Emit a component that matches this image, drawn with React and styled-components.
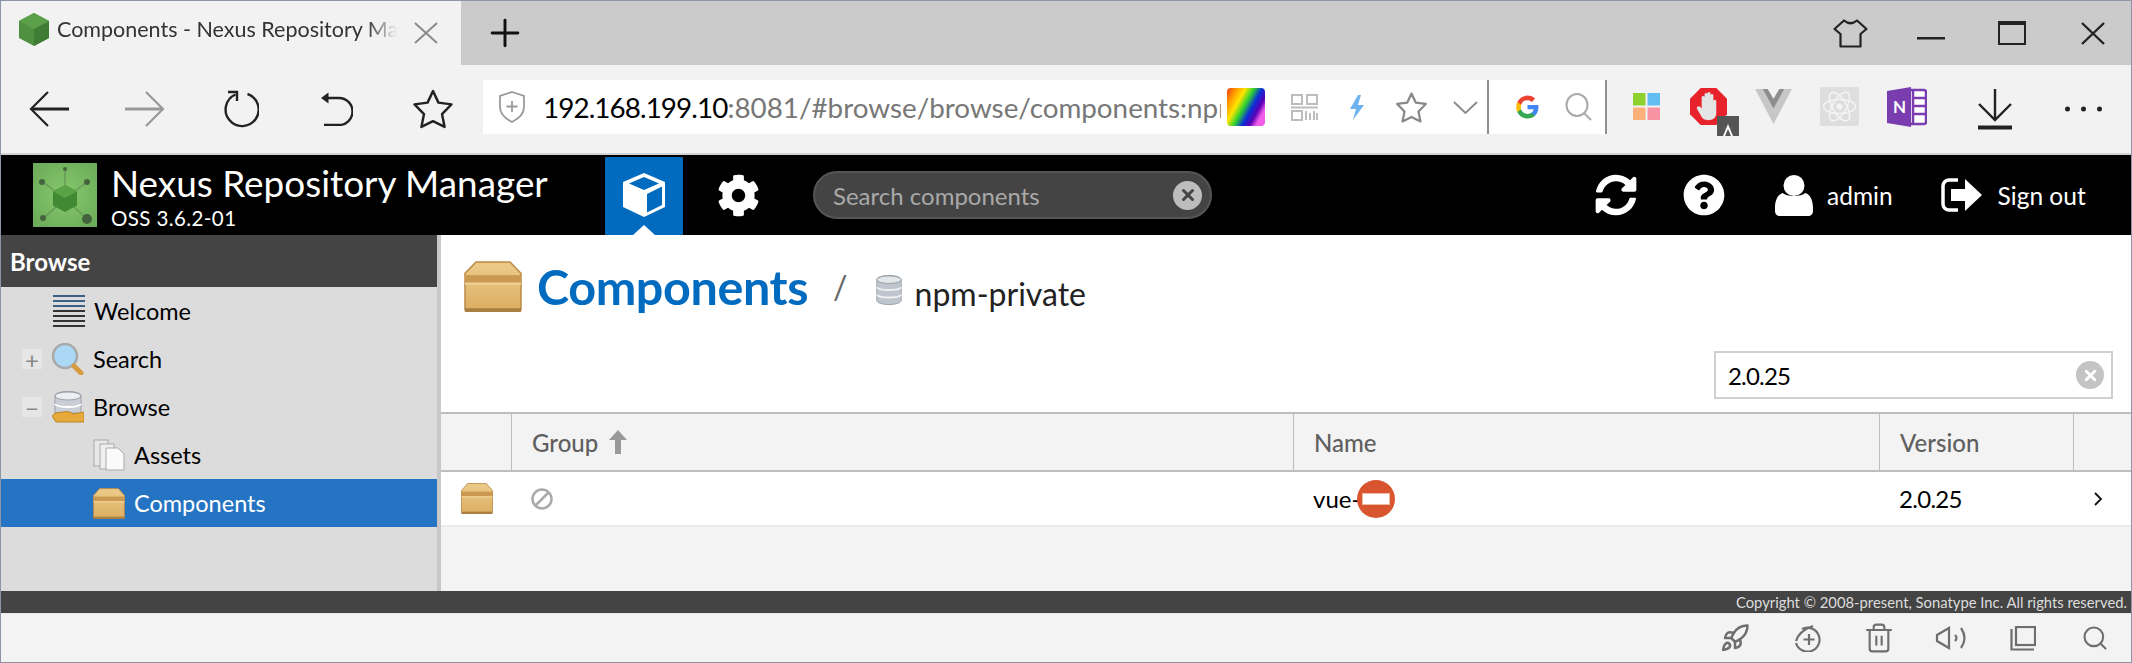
import React from "react";
import styled, { createGlobalStyle } from "styled-components";
import { FaCog, FaQuestionCircle, FaSyncAlt } from "react-icons/fa";
import { Trash2, Search as SearchGlyph, Rocket, X, Plus } from "lucide-react";

const Global = createGlobalStyle`
  html, body { margin: 0; padding: 0; background: #fff; }
  body { font-family: Lato, "Noto Sans", sans-serif; color: #000; }
`;
const Page = styled.div`
  width: 2132px; height: 663px; box-sizing: border-box; overflow: hidden;
  border: 1px solid #8c96a8; display: flex; flex-direction: column;
`;
const TabStrip = styled.div`
  height: 64px; flex: none; background: #cbcbcb; display: flex; align-items: stretch;
`;
const ActiveTab = styled.div`
  width: 460px; background: #f2f2f2; display: flex; align-items: center; padding: 0 0 8px 18px; box-sizing: border-box;
`;
const TabTitle = styled.div`
  width: 340px; margin-left: 8px; white-space: nowrap; overflow: hidden; font-size: 21.5px; color: #333;
  -webkit-mask-image: linear-gradient(90deg, #000 91%, transparent 100%);
  mask-image: linear-gradient(90deg, #000 91%, transparent 100%);
`;
const TabClose = styled.div`
  margin: 8px 0 0 17px; display: flex;
`;
const NewTab = styled.div`
  width: 88px; display: flex; align-items: center; justify-content: center; color: #111;
`;
const Spacer = styled.div`flex: 1;`;
const WindowControls = styled.div`
  display: flex; gap: 41px; padding-right: 18px;
`;
const WindowBtn = styled.div`
  width: 40px; display: flex; align-items: center; justify-content: center;
`;
const Toolbar = styled.div`
  height: 88px; flex: none; background: #f2f2f2; display: flex; align-items: center; border-bottom: 2px solid #d4d4d4;
`;
const NavBtn = styled.div`
  width: 96px; height: 100%; flex: none; display: flex; align-items: center; justify-content: center;
`;
const NavGroup = styled.div`
  display: flex; height: 100%; width: 482px; flex: none;
`;
const Address = styled.div`
  width: 1124px; height: 54px; background: #fff; flex: none; display: flex; align-items: center; box-sizing: border-box;
  padding-left: 16px; margin-top: -4px; border-right: 2px solid #8f8f8f;
`;
const UrlText = styled.div`
  width: 678px; flex: none; margin-left: 18px; overflow: hidden; white-space: nowrap; font-size: 27.8px; color: #777;
  b { font-weight: 400; color: #000; letter-spacing: -.9px; }
`;
const AddrIcon = styled.div`
  width: ${p => p.$w}px; margin-left: ${p => p.$ml || 0}px; flex: none; display: flex; justify-content: center; align-items: center;
  svg { flex: none; }
`;
const Divider = styled.div`
  width: 2px; height: 100%; background: #8f8f8f; flex: none;
`;
const Extensions = styled.div`
  display: flex; align-items: center; padding: 0 0 5px 9px; flex: none;
`;
const ExtBtn = styled.div`
  position: relative; width: ${p => p.$w}px; display: flex; align-items: center; justify-content: center;
`;
const Badge = styled.div`
  position: absolute; left: 40px; top: 28px; width: 22px; height: 20px; background: #555;
  display: flex; align-items: flex-end; justify-content: center;
`;
const ToolEnd = styled.div`
  width: ${p => p.$w}px; display: flex; justify-content: center; align-items: center; flex: none;
`;
const AppHeader = styled.div`
  height: 80px; flex: none; background: #000; display: flex; align-items: center; color: #fff;
`;
const Logo = styled.div`
  width: 64px; height: 64px; margin-left: 32px; flex: none; display: flex;
`;
const Brand = styled.div`
  margin-left: 14px; width: 494px; flex: none;
`;
const BrandName = styled.div`
  font-size: 36.9px; line-height: 40px; white-space: nowrap; margin-top: 2px;
`;
const BrandVersion = styled.div`
  font-size: 20.5px; line-height: 22px; letter-spacing: .4px; white-space: nowrap; margin-top: 4px;
`;
const ModeTab = styled.div`
  position: relative; width: 78px; height: 78px; margin-top: 2px; flex: none; background: #006bbf;
  display: flex; align-items: flex-start; justify-content: center; padding-top: 15px; box-sizing: border-box;
  &::after { content: ""; position: absolute; left: 28px; bottom: 0; border: 11px solid transparent; border-top: 0; border-bottom: 10px solid #fff; }
`;
const GearBtn = styled.div`
  width: 111px; display: flex; justify-content: center; flex: none;
`;
const SearchBox = styled.div`
  width: 399px; height: 48px; margin-left: 19px; box-sizing: border-box; background: #444; border: 2px solid #555; border-radius: 24px;
  display: flex; align-items: center; padding: 0 8px 0 18px; justify-content: space-between; color: #a9a9a9; font-size: 24px; flex: none;
`;
const HeaderBtn = styled.div`
  display: flex; align-items: center; margin-left: ${p => p.$ml}px; font-size: 24.5px; gap: ${p => p.$gap || 0}px; white-space: nowrap; flex: none;
`;
const ClearDot = styled.div`
  width: ${p => p.$s}px; height: ${p => p.$s}px; border-radius: 50%; background: ${p => p.$bg};
  display: flex; align-items: center; justify-content: center; color: ${p => p.$fg}; flex: none;
`;
const Body = styled.div`
  height: 356px; flex: none; display: flex;
`;
const Sidebar = styled.div`
  width: 436px; flex: none; background: #dcdcdc; border-right: 4px solid #c8c8c8;
`;
const SidebarHead = styled.div`
  height: 52px; background: #444; color: #fff; font-size: 24px; font-weight: 700; display: flex; align-items: center; padding-left: 9px;
`;
const TreeRow = styled.div`
  height: 48px; display: flex; align-items: center; font-size: 23.5px; padding-left: ${p => p.$pl}px;
  background: ${p => p.$sel ? "#2574c3" : "transparent"}; color: ${p => p.$sel ? "#fff" : "#000"};
`;
const Expander = styled.div`
  width: 20px; height: 20px; margin-right: 10px; background: #e6e6e6; color: #888; font-size: 24px; display: flex; align-items: center; justify-content: center; flex: none;
`;
const TreeIcon = styled.div`
  width: 32px; height: 32px; margin-right: 9px; display: flex; align-items: center; flex: none;
`;
const Main = styled.div`
  flex: 1; min-width: 0; display: flex; flex-direction: column; background: #f3f3f3;
`;
const TitleBar = styled.div`
  height: 116px; background: #fff; flex: none; display: flex; align-items: flex-start; padding: 26px 0 0 23px; box-sizing: border-box;
`;
const TitleText = styled.div`
  color: #006bbf; font-size: 48.5px; font-weight: 700; line-height: 50px; margin-left: 15px; letter-spacing: -.4px;
`;
const Slash = styled.div`
  font-size: 32px; color: #666; margin: 6px 27px 0 25px; line-height: 40px;
`;
const CrumbIcon = styled.div`
  margin-top: 14px; display: flex;
`;
const Crumb = styled.div`
  font-size: 32px; line-height: 40px; margin: 13px 0 0 12px; color: #222;
`;
const FilterBar = styled.div`
  height: 61px; flex: none; background: #fff; display: flex; justify-content: flex-end; padding-right: 18px; box-sizing: border-box;
`;
const Filter = styled.div`
  width: 399px; height: 48px; box-sizing: border-box; border: 2px solid #cfcfcf; display: flex; align-items: center; justify-content: space-between;
  font-size: 24px; padding: 0 7px 0 12px; background: #fff; letter-spacing: -.8px;
`;
const Cols = "70px 782px 586px 194px 59px";
const HeadRow = styled.div`
  display: grid; grid-template-columns: ${Cols}; height: 60px; flex: none; box-sizing: border-box; background: #f3f3f3;
  border-top: 2px solid #bdbdbd; border-bottom: 2px solid #bdbdbd; padding-bottom: 2px;
`;
const HeadCell = styled.div`
  display: flex; align-items: center; gap: 10px; font-size: 24px; font-weight: 500; color: #5f5f5f; padding-left: 20px;
  &:not(:first-child) { border-left: 1px solid #bdbdbd; margin-bottom: -2px; }
`;
const DataRow = styled.div`
  display: grid; grid-template-columns: ${Cols}; height: 55px; flex: none; box-sizing: border-box; background: #fff; border-bottom: 2px solid #ececec;
`;
const DataCell = styled.div`
  display: flex; align-items: center; font-size: 24px; padding-left: 20px; min-width: 0; position: relative; letter-spacing: ${p => p.$tight ? "-.7px" : "0"};
`;
const Blocked = styled.div`
  position: absolute; left: 64px; top: 8px; width: 38px; height: 38px; border-radius: 50%; background: #d8552f;
  display: flex; align-items: center; justify-content: center;
  &::after { content: ""; width: 26px; height: 10px; background: #fff; border: 1px solid #f2b9a4; }
`;
const Footer = styled.div`
  height: 22px; flex: none; background: #444; color: #ddd; font-size: 14.8px; display: flex; align-items: center; justify-content: flex-end; padding-right: 4px;
`;
const StatusBar = styled.div`
  flex: 1; background: #f3f3f3; display: flex; justify-content: flex-end; align-items: center; border-top: 1px solid #e8e8e8;
`;
const StatusBtn = styled.div`
  width: 72px; display: flex; justify-content: center; color: #6e6e6e;
`;
const BoxSvg = styled.svg`flex: none;`;

const Hex = () => (
  <svg width="30" height="33" viewBox="0 0 30 33">
    <path d="M15 0 30 8v17l-15 8-15-8V8z" fill="#4e9040" />
    <path d="M15 16 30 8v17l-15 8z" fill="#3f7d34" />
    <path d="M15 0 30 8 15 16 0 8z" fill="#5ca04a" />
  </svg>
);
const Box = ({ w, h }) => (
  <BoxSvg width={w} height={h} viewBox="0 0 58 54" preserveAspectRatio="none">
    <defs><linearGradient id="bx" x1="0" y1="0" x2="0" y2="1"><stop offset="0" stopColor="#eccb8a" /><stop offset="1" stopColor="#dcae62" /></linearGradient></defs>
    <path d="M12 1h34l11 12v38a2 2 0 0 1-2 2H3a2 2 0 0 1-2-2V13z" fill="url(#bx)" stroke="#b98a45" strokeWidth="1.500" />
    <rect x="1" y="15" width="56" height="8" fill="#c99a4f" />
    <rect x="1" y="23" width="56" height="2" fill="#f0d49c" />
    <rect x="1" y="50" width="56" height="4" fill="#a97f42" />
  </BoxSvg>
);
const Cube = () => (
  <svg width="46" height="46" viewBox="0 0 46 46">
    <path d="M23 1 44 10v25L23 45 2 35V10z" fill="#fff" />
    <path d="M23 5 38 11.500 23 18 8 11.500z" fill="#006bbf" />
    <path d="M26 22 41 14.500V33L26 40.500z" fill="#006bbf" />
  </svg>
);
const NexusLogo = () => (
  <svg width="64" height="64" viewBox="0 0 64 64">
    <defs><radialGradient id="g" cx=".5" cy=".5" r=".7"><stop offset="0" stopColor="#86c96c" /><stop offset="1" stopColor="#6aa958" /></radialGradient></defs>
    <rect width="64" height="64" fill="url(#g)" />
    <g stroke="#5d8d52" strokeWidth="1.500" opacity=".7">
      <path d="M32 8v14M10 19l12 9M54 19l-12 9M12 54l12-11M52 54l-12-11" />
    </g>
    <g fill="#44643e"><circle cx="9" cy="19" r="3" /><circle cx="54" cy="19" r="3" /><circle cx="32" cy="6" r="2" /><circle cx="10" cy="55" r="3" /><circle cx="54" cy="56" r="5" /></g>
    <path d="M32 22l12 6.500v14L32 49 20 42.500v-14z" fill="#3f8a32" />
    <path d="M32 22l12 6.500L32 35 20 28.500z" fill="#5aa344" />
  </svg>
);
const Lines = () => (
  <svg width="32" height="32" viewBox="0 0 32 32">
    {[0, 1, 2, 3, 4, 5, 6].map(i => <rect key={i} y={i * 5} width="32" height="2" fill={i < 3 ? "#3d5f86" : "#333"} />)}
  </svg>
);
const Magnifier = () => (
  <svg width="32" height="32" viewBox="0 0 32 32">
    <circle cx="13" cy="13" r="12" fill="#aad8f5" stroke="#a9a9a9" strokeWidth="2.500" />
    <path d="M22 23l7 7" stroke="#d59b3f" strokeWidth="5" strokeLinecap="round" />
  </svg>
);
const DbHand = () => (
  <svg width="32" height="32" viewBox="0 0 32 32">
    <path d="M3 5c0-6 26-6 26 0v17H3z" fill="#c9ced6" stroke="#9aa0aa" />
    <ellipse cx="16" cy="5" rx="13" ry="4" fill="#eceef2" stroke="#9aa0aa" />
    <path d="M3 13c3 4 23 4 26 0" fill="none" stroke="#fff" strokeWidth="2" />
    <path d="M0 25c4-5 8-3 11-4 4-1 8 0 10 2l11-2v10H4z" fill="#e6a93a" stroke="#b9862b" />
  </svg>
);
const Pages = () => (
  <svg width="32" height="32" viewBox="0 0 32 32">
    <rect x="1" y="1" width="14" height="26" fill="#e8e8e8" stroke="#aaa" />
    <rect x="7" y="5" width="14" height="25" fill="#efefef" stroke="#aaa" />
    <path d="M13 9h12l6 6v16H13z" fill="#fafafa" stroke="#aaa" />
  </svg>
);
const Database = () => (
  <svg width="28" height="30" viewBox="0 0 28 32">
    <path d="M1 5c0-6 26-6 26 0v22c0 6-26 6-26 0z" fill="#bfc5cc" stroke="#98a0a8" />
    <ellipse cx="14" cy="5" rx="13" ry="4" fill="#e4e7ea" stroke="#98a0a8" />
    <path d="M1 13c3 4 23 4 26 0M1 21c3 4 23 4 26 0" fill="none" stroke="#eef0f2" strokeWidth="2" />
  </svg>
);
const BanIcon = () => (
  <svg width="22" height="22" viewBox="0 0 22 22" fill="none" stroke="#aaa" strokeWidth="2.500">
    <circle cx="11" cy="11" r="9.500" /><path d="M4.500 17.500l13-13" />
  </svg>
);
const UpArrow = () => (
  <svg width="20" height="24" viewBox="0 0 20 24"><path d="M10 0l9 10h-6v14H7V10H1z" fill="#999" /></svg>
);
const Rainbow = () => (
  <svg width="38" height="38" viewBox="0 0 38 38">
    <defs><linearGradient id="r" x1="0" y1="0" x2="1" y2=".55">
      <stop offset="0" stopColor="#f03a14" /><stop offset=".2" stopColor="#ff9a00" /><stop offset=".38" stopColor="#ffe600" /><stop offset=".55" stopColor="#2fd32f" />
      <stop offset=".72" stopColor="#0a2fd8" /><stop offset=".87" stopColor="#5a00b5" /><stop offset="1" stopColor="#f05ce8" /></linearGradient></defs>
    <rect width="38" height="38" rx="4" fill="url(#r)" />
  </svg>
);
const QrIcon = () => (
  <svg width="27" height="27" viewBox="0 0 27 27" fill="none" stroke="#bdbdbd" strokeWidth="2">
    <rect x="1" y="1" width="10" height="9" /><rect x="16" y="1" width="10" height="9" /><path d="M0 13.500h27" /><rect x="1" y="17" width="10" height="9" />
    <path d="M15 17v9M19 19v7M23 17v9M26 19v7" />
  </svg>
);
const Bolt = () => (
  <svg width="16" height="25" viewBox="0 0 16 25"><path d="M9 0 1 14h6l-3 11L15 10H9l3-10z" fill="#6db3ee" /></svg>
);
const StarIcon = ({ s, c, sw }) => (
  <svg width={s} height={s} viewBox="0 0 39 39" fill="none" stroke={c} strokeWidth={sw} strokeLinejoin="round">
    <path d="M19.500 2 24.800 13.300 37.500 15 28.300 24.500 30.800 37 19.500 31.400 8.200 37 10.700 24.500 1.500 15 14.200 13.300z" />
  </svg>
);
const GoogleG = () => (
  <svg width="25" height="26" viewBox="0 0 48 48">
    <path fill="#4285F4" d="M45.100 24.500c0-1.600-.100-3.100-.400-4.500H24v8.500h11.800c-.500 2.800-2 5.100-4.400 6.700v5.600h7.100c4.200-3.800 6.600-9.500 6.600-16.300z" />
    <path fill="#34A853" d="M24 46c5.900 0 10.900-2 14.500-5.300l-7.100-5.600c-2 1.300-4.500 2.100-7.400 2.100-5.700 0-10.500-3.800-12.200-9H4.500v5.700C8.100 41.200 15.500 46 24 46z" />
    <path fill="#FBBC05" d="M11.800 28.100c-.400-1.300-.700-2.700-.700-4.100s.300-2.800.700-4.100v-5.700H4.500C3 17.200 2.200 20.500 2.200 24s.800 6.800 2.300 9.800z" />
    <path fill="#EA4335" d="M24 10.900c3.200 0 6.100 1.100 8.400 3.300l6.300-6.300C34.900 4.300 29.900 2 24 2 15.500 2 8.100 6.800 4.500 14.200l7.300 5.700c1.700-5.200 6.500-9 12.200-9z" />
  </svg>
);
const Tiles = () => (
  <svg width="27" height="27" viewBox="0 0 27 27">
    <rect width="12.500" height="12.500" fill="#8ed12f" /><rect x="14.500" width="12.500" height="12.500" fill="#62bdf5" />
    <rect y="14.500" width="12.500" height="12.500" fill="#fdb07a" /><rect x="14.500" y="14.500" width="12.500" height="12.500" fill="#f893a3" />
  </svg>
);
const AdBlock = () => (
  <svg width="37" height="37" viewBox="0 0 38 38">
    <path d="M11 0h16l11 11v16L27 38H11L0 27V11z" fill="#e8222a" />
    <path d="M12 22V9a2 2 0 0 1 3 0V6a2 2 0 0 1 3 0v-1a2 2 0 0 1 3 0v2a2 2 0 0 1 3 0v6a2 2 0 0 1 3 0v13c0 5-4 7-8 7s-6-1-8-5l-4-7c0-3 3-3 5 0z" fill="#e4e4e4" />
  </svg>
);
const VueGray = () => (
  <svg width="39" height="35" viewBox="0 0 38 36">
    <path d="M0 0h38L19 36z" fill="#c7c7c7" /><path d="M8 0h22L19 20z" fill="#8e8e8e" /><path d="M13 0h12L19 10z" fill="#f2f2f2" />
  </svg>
);
const ReactGray = () => (
  <svg width="39" height="39" viewBox="0 0 39 39">
    <rect width="39" height="39" rx="2" fill="#dedede" />
    <g fill="none" stroke="#f4f4f4" strokeWidth="1.500">
      <ellipse cx="19.500" cy="19.500" rx="16" ry="7" /><ellipse cx="19.500" cy="19.500" rx="16" ry="7" transform="rotate(60 19.500 19.500)" /><ellipse cx="19.500" cy="19.500" rx="16" ry="7" transform="rotate(120 19.500 19.500)" />
    </g>
    <circle cx="19.500" cy="19.500" r="3" fill="#f4f4f4" />
  </svg>
);
const OneNote = () => (
  <svg width="40" height="40" viewBox="0 0 40 40">
    <path d="M19 3h18a2 2 0 0 1 2 2v30a2 2 0 0 1-2 2H19z" fill="#fff" stroke="#7a3db0" strokeWidth="2.500" />
    <path d="M26 3v34M26 11h13M26 19h13M26 27h13" stroke="#7a3db0" strokeWidth="2.500" />
    <path d="M0 4 24 0v40L0 36z" fill="#7a3db0" />
    <text x="6" y="26" fontFamily="Lato, sans-serif" fontWeight="700" fontSize="17" fill="#fff">N</text>
  </svg>
);
const BackArrow = ({ c, flip }) => (
  <svg width="40" height="36" viewBox="0 0 40 36" fill="none" stroke={c} transform={flip ? "scale(-1 1)" : undefined}>
    <path d="M19 1 2 18l17 17" strokeWidth="2.200" /><path d="M3 18h37" strokeWidth="3.200" />
  </svg>
);
const Reload = () => (
  <svg width="36" height="38" viewBox="0 0 36 38" fill="none" stroke="#222" strokeWidth="2.400">
    <path d="M12.500 4.500A16.500 16.500 0 1 0 24.500 4" /><path d="M5 2h9v9" />
  </svg>
);
const UndoIcon = () => (
  <svg width="32" height="34" viewBox="0 0 32 34" fill="none" stroke="#222" strokeWidth="2.400">
    <path d="M3 6h15a13.500 13.500 0 0 1 0 27H3" /><path d="M0 6l7.500-5.500v11z" fill="#222" stroke="none" />
  </svg>
);
const Shirt = () => (
  <svg width="35" height="29" viewBox="0 0 35 29" fill="none" stroke="#222" strokeWidth="2.200" strokeLinejoin="round">
    <path d="M11 1.500Q17.500 7 24 1.500L33.500 10 27.500 15V27.500H7.500V15L1.500 10z" />
  </svg>
);
const MinimizeIcon = () => (
  <svg width="28" height="26" viewBox="0 0 28 26"><rect y="17" width="28" height="2.500" fill="#222" /></svg>
);
const Maximize = () => (
  <svg width="28" height="24" viewBox="0 0 28 24" fill="none" stroke="#222" strokeWidth="2">
    <rect x="1" y="1" width="26" height="22" /><path d="M1 2.500h26" strokeWidth="3" />
  </svg>
);
const Cross = ({ w, h, c, sw }) => (
  <svg width={w} height={h} viewBox={`0 0 ${w} ${h}`} fill="none" stroke={c} strokeWidth={sw}>
    <path d={`M1 1 ${w - 1} ${h - 1}M${w - 1} 1 1 ${h - 1}`} />
  </svg>
);
const Chevron = () => (
  <svg width="25" height="13" viewBox="0 0 25 13" fill="none" stroke="#888" strokeWidth="1.800"><path d="M1 1l11.500 11L24 1" /></svg>
);
const Lens = () => (
  <svg width="27" height="28" viewBox="0 0 27 28" fill="none" stroke="#aaa" strokeWidth="2">
    <ellipse cx="12" cy="12" rx="10.500" ry="11" /><path d="M19 20l7 7" />
  </svg>
);
const DownloadIcon = () => (
  <svg width="34" height="41" viewBox="0 0 34 41" fill="none" stroke="#222" strokeWidth="2.400">
    <path d="M17 0v31M1 15l16 16 16-16" /><path d="M0 38.500h34" strokeWidth="4" />
  </svg>
);
const Dots = () => (
  <svg width="37" height="6" viewBox="0 0 37 6" fill="#222"><circle cx="2.500" cy="3" r="2.500" /><circle cx="18.500" cy="3" r="2.500" /><circle cx="34.500" cy="3" r="2.500" /></svg>
);
const UserIcon = () => (
  <svg width="38" height="41" viewBox="0 0 38 41" fill="#fff">
    <circle cx="19" cy="10.500" r="10.500" />
    <path d="M8 18c3 4 19 4 22 0 5 1 8 7 8 15v3c0 3-2 5-5 5H5c-3 0-5-2-5-5v-3c0-8 3-14 8-15z" />
  </svg>
);
const SignOutIcon = () => (
  <svg width="42" height="34" viewBox="0 0 42 34">
    <path d="M17 2H8a6 6 0 0 0-6 6v18a6 6 0 0 0 6 6h9" fill="none" stroke="#fff" strokeWidth="3.500" />
    <path d="M10 11h14V1l17 16-17 16V23H10z" fill="#fff" />
  </svg>
);
const SpeakerIcon = () => (
  <svg width="32" height="24" viewBox="0 0 32 24" fill="none" stroke="#6e6e6e" strokeWidth="2.200">
    <path d="M2 9 14 2v20L2 15zM20 9q3 3 0 6M26 2q7 10 0 20" />
  </svg>
);
const PagesOutline = () => (
  <svg width="26" height="25" viewBox="0 0 26 25" fill="none" stroke="#6e6e6e" strokeWidth="2.200">
    <rect x="6" y="1" width="19" height="18" /><path d="M1.500 3v20.500H24" />
  </svg>
);
const AddCircle = () => (
  <svg width="28" height="27" viewBox="0 0 28 27" fill="none" stroke="#6e6e6e" strokeWidth="2.200">
    <path d="M9 4a12 12 0 1 1-6 14" /><path d="M16 9v11M10.500 14.500h11M3 16Q6 6 20 1" />
  </svg>
);

export default function App() {
  return (
    <>
      <Global />
      <Page>
        <TabStrip>
          <ActiveTab>
            <Hex />
            <TabTitle>Components - Nexus Repository Manager</TabTitle>
            <TabClose><Cross w={24} h={22} c="#8a8a8a" sw={2} /></TabClose>
          </ActiveTab>
          <NewTab><Plus size={44} strokeWidth={1.6} /></NewTab>
          <Spacer />
          <WindowControls>
            <WindowBtn><Shirt /></WindowBtn>
            <WindowBtn><MinimizeIcon /></WindowBtn>
            <WindowBtn><Maximize /></WindowBtn>
            <WindowBtn><Cross w={24} h={23} c="#222" sw={2.4} /></WindowBtn>
          </WindowControls>
        </TabStrip>
        <Toolbar>
          <NavGroup>
            <NavBtn><BackArrow c="#222" /></NavBtn>
            <NavBtn><BackArrow c="#999" flip /></NavBtn>
            <NavBtn><Reload /></NavBtn>
            <NavBtn><UndoIcon /></NavBtn>
            <NavBtn><StarIcon s={40} c="#222" sw={2.4} /></NavBtn>
          </NavGroup>
          <Address>
            <AddrIcon $w={26}>
              <svg width="26" height="32" viewBox="0 0 26 32" fill="none" stroke="#999" strokeWidth="1.800"><path d="M13 1l12 4v11c0 8-6 12-12 15C7 28 1 24 1 16V5z" /><path d="M13 10v11M7.500 15.500h11" /></svg>
            </AddrIcon>
            <UrlText><b>192.168.199.10</b>:8081/#browse/browse/components:npm-private</UrlText>
            <AddrIcon $w={38} $ml={6}><Rainbow /></AddrIcon>
            <AddrIcon $w={78}><QrIcon /></AddrIcon>
            <AddrIcon $w={27}><Bolt /></AddrIcon>
            <AddrIcon $w={83}><StarIcon s={31} c="#888" sw={2.800} /></AddrIcon>
            <AddrIcon $w={25}><Chevron /></AddrIcon>
            <Spacer />
            <Divider />
            <AddrIcon $w={76}><GoogleG /></AddrIcon>
            <AddrIcon $w={27}><Lens /></AddrIcon>
            <AddrIcon $w={13} />
          </Address>
          <Extensions>
            <ExtBtn $w={61}><Tiles /></ExtBtn>
            <ExtBtn $w={63}><AdBlock /><Badge><svg width="10" height="12" viewBox="0 0 10 12"><path d="M5 0 0 12h2l3-7 3 7h2z" fill="#fff" /></svg></Badge></ExtBtn>
            <ExtBtn $w={67}><VueGray /></ExtBtn>
            <ExtBtn $w={65}><ReactGray /></ExtBtn>
            <ExtBtn $w={70}><OneNote /></ExtBtn>
          </Extensions>
          <ToolEnd $w={106}><DownloadIcon /></ToolEnd>
          <ToolEnd $w={70}><Dots /></ToolEnd>
        </Toolbar>
        <AppHeader>
          <Logo><NexusLogo /></Logo>
          <Brand>
            <BrandName>Nexus Repository Manager</BrandName>
            <BrandVersion>OSS 3.6.2-01</BrandVersion>
          </Brand>
          <ModeTab><Cube /></ModeTab>
          <GearBtn><FaCog size={43} /></GearBtn>
          <SearchBox>
            <span>Search components</span>
            <ClearDot $s={29} $bg="#bdbdbd" $fg="#444"><X size={18} strokeWidth={4} /></ClearDot>
          </SearchBox>
          <HeaderBtn $ml={383}><FaSyncAlt size={42} /></HeaderBtn>
          <HeaderBtn $ml={46}><FaQuestionCircle size={42} /></HeaderBtn>
          <HeaderBtn $ml={50} $gap={14}><UserIcon /> admin</HeaderBtn>
          <HeaderBtn $ml={48} $gap={15}><SignOutIcon /> Sign out</HeaderBtn>
        </AppHeader>
        <Body>
          <Sidebar>
            <SidebarHead>Browse</SidebarHead>
            <TreeRow $pl={52}><TreeIcon><Lines /></TreeIcon>Welcome</TreeRow>
            <TreeRow $pl={21}><Expander>+</Expander><TreeIcon><Magnifier /></TreeIcon>Search</TreeRow>
            <TreeRow $pl={21}><Expander>−</Expander><TreeIcon><DbHand /></TreeIcon>Browse</TreeRow>
            <TreeRow $pl={92}><TreeIcon><Pages /></TreeIcon>Assets</TreeRow>
            <TreeRow $pl={92} $sel><TreeIcon><Box w={32} h={31} /></TreeIcon>Components</TreeRow>
          </Sidebar>
          <Main>
            <TitleBar>
              <Box w={58} h={51} />
              <TitleText>Components</TitleText>
              <Slash>/</Slash>
              <CrumbIcon><Database /></CrumbIcon>
              <Crumb>npm-private</Crumb>
            </TitleBar>
            <FilterBar>
              <Filter>2.0.25<ClearDot $s={28} $bg="#c4c4c4" $fg="#fff"><X size={17} strokeWidth={4} /></ClearDot></Filter>
            </FilterBar>
            <HeadRow>
              <HeadCell />
              <HeadCell>Group <UpArrow /></HeadCell>
              <HeadCell>Name</HeadCell>
              <HeadCell>Version</HeadCell>
              <HeadCell />
            </HeadRow>
            <DataRow>
              <DataCell><Box w={32} h={31} /></DataCell>
              <DataCell><BanIcon /></DataCell>
              <DataCell>vue-<Blocked /></DataCell>
              <DataCell $tight>2.0.25</DataCell>
              <DataCell><svg width="10" height="14" viewBox="0 0 10 14" fill="none" stroke="#111" strokeWidth="1.800"><path d="M2 1l6 6-6 6" /></svg></DataCell>
            </DataRow>
          </Main>
        </Body>
        <Footer>Copyright © 2008-present, Sonatype Inc. All rights reserved.</Footer>
        <StatusBar>
          <StatusBtn><Rocket size={30} strokeWidth={2} /></StatusBtn>
          <StatusBtn><AddCircle /></StatusBtn>
          <StatusBtn><Trash2 size={32} strokeWidth={1.6} /></StatusBtn>
          <StatusBtn><SpeakerIcon /></StatusBtn>
          <StatusBtn><PagesOutline /></StatusBtn>
          <StatusBtn><SearchGlyph size={28} strokeWidth={1.8} /></StatusBtn>
        </StatusBar>
      </Page>
    </>
  );
}
